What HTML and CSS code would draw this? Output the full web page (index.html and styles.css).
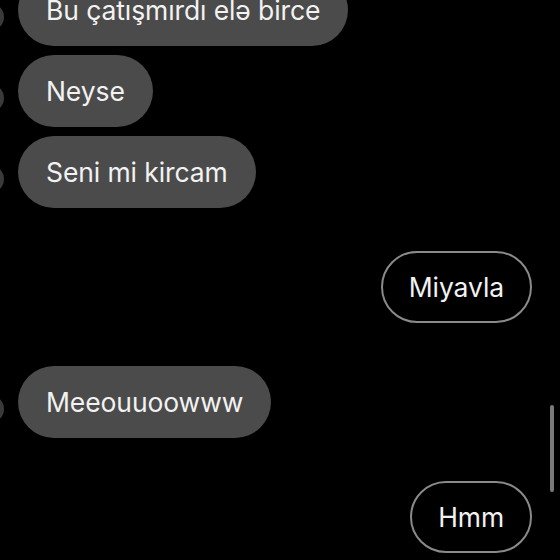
FILE: index.html
```html
<!DOCTYPE html>
<html lang="az">
<head>
    <meta charset="UTF-8">
    <meta name="viewport" content="width=device-width, initial-scale=1.0">
    <title>Sohbet</title>
    <link rel="stylesheet" href="styles.css">
</head>
<body>

    <div class="chat">
        <div class="group">
            <div class="row in">
                <div class="avatar"></div>
                <div class="bubble">Bu çatışmırdı elə birce</div>
            </div>
            <div class="row in">
                <div class="avatar"></div>
                <div class="bubble">Neyse</div>
            </div>
            <div class="row in">
                <div class="avatar"></div>
                <div class="bubble">Seni mi kircam</div>
            </div>
        </div>

        <div class="row out">
            <div class="bubble">Miyavla</div>
        </div>

        <div class="row in">
            <div class="avatar"></div>
            <div class="bubble">Meeouuoowww</div>
        </div>

        <div class="row out">
            <div class="bubble">Hmm</div>
        </div>

        <div class="composer-line"></div>
    </div>

    <!-- barra de scroll -->
    <div class="scrollbar"></div>

</body>
</html>
```

FILE: styles.css
```css
* {
    margin: 0;
    padding: 0;
    box-sizing: border-box;
}

html, body {
    background: #000;
    height: 100%;
    overflow: hidden;
}

body {
    font-family: Inter, "Noto Sans", sans-serif;
    color: #f2f2f2;
    position: relative;
}

.chat {
    display: flex;
    flex-direction: column;
    gap: 43px;
    margin-top: -26px;
}

.group {
    display: flex;
    flex-direction: column;
    gap: 9px;
}

.row {
    display: flex;
    align-items: center;
}

.row.in {
    gap: 14px;
}

.row.out {
    justify-content: flex-end;
    padding-right: 28px;
}

.avatar {
    width: 28px;
    height: 28px;
    margin-left: -24px;
    margin-top: 14px;
    border-radius: 50%;
    background: #3a3a3a;
    flex-shrink: 0;
}

.bubble {
    height: 72px;
    line-height: 72px;
    padding: 0 28px;
    border-radius: 36px;
    font-size: 26.5px;
    white-space: nowrap;
    letter-spacing: -0.1px;
}

.in .bubble {
    background: #4b4b4b;
}

.out .bubble {
    border: 2px solid #8a8a8a;
    line-height: 68px;
    padding: 0 26px;
}

.composer-line {
    width: 110px;
    height: 2px;
    margin-left: 390px;
    margin-top: -36px;
    background: #3c3c3c;
}

.scrollbar {
    position: absolute;
    left: 550px;
    top: 405px;
    width: 4px;
    height: 87px;
    border-radius: 2px;
    background: #7a7a7a;
}
```
